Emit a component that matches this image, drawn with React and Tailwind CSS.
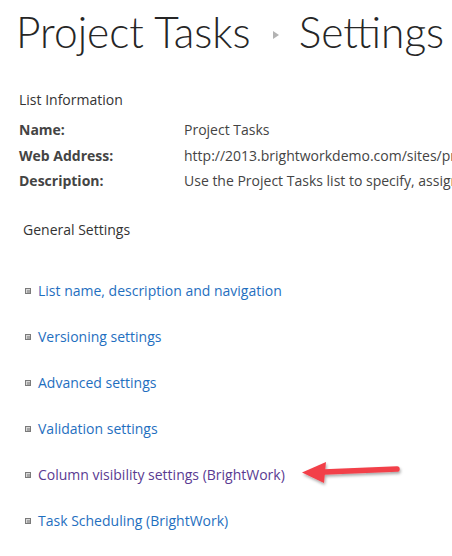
import React from 'react'

const font = { fontFamily: '"Open Sans", "Noto Sans", sans-serif' }
const titleFont = { fontFamily: 'Lato, "Open Sans", sans-serif' }

function Bullet() {
  return (
    <span className="inline-block w-[6px] h-[6px] bg-[#a6a6a6] border border-[#7a7a7a] shadow-[inset_1px_1px_0_#d8d8d8] mr-[7px] shrink-0" />
  )
}

function SettingLink({ children, visited }) {
  return (
    <li className="flex items-center h-[46px]">
      <Bullet />
      <a
        href="#"
        className={`text-[14px] ${visited ? 'text-[#5a3b92]' : 'text-[#1f6fc0]'}`}
      >
        {children}
      </a>
    </li>
  )
}

function Arrow() {
  return (
    <svg className="absolute left-[273px] top-[-17px]" width="110" height="30" viewBox="0 0 110 30">
      <defs>
        <filter id="sh" x="-20%" y="-50%" width="140%" height="200%">
          <feDropShadow dx="1" dy="2" stdDeviation="1.5" floodColor="#000" floodOpacity="0.35" />
        </filter>
      </defs>
      <g filter="url(#sh)">
        <line x1="26" y1="14" x2="99" y2="11" stroke="#f2404a" strokeWidth="5.5" strokeLinecap="round" />
        <polygon points="4,14.5 28,4 26,25" fill="#f2404a" />
      </g>
    </svg>
  )
}

export default function App() {
  return (
    <div className="w-[452px] h-[556px] bg-white overflow-hidden text-[#444]" style={font}>
      <div className="flex items-center pl-[16px] pt-[3px] h-[62px] text-[#262626] whitespace-nowrap" style={titleFont}>
        <span className="text-[42.5px] font-light leading-none">Project Tasks</span>
        <span className="ml-[22px] mr-[20px] w-0 h-0 border-y-[4.5px] border-y-transparent border-l-[6px] border-l-[#b3b3b3] mt-[4px] shrink-0" />
        <span className="text-[42.5px] font-light leading-none">Settings</span>
      </div>

      <div className="pl-[19px] pt-[28px]">
        <div className="text-[14px] leading-[20px] text-[#333]">List Information</div>
        <div className="mt-[7px] text-[14px]">
          <div className="flex h-[25.5px] items-center">
            <span className="w-[165px] shrink-0 font-bold text-[#444]">Name:</span>
            <span className="whitespace-nowrap">Project Tasks</span>
          </div>
          <div className="flex h-[25.5px] items-center">
            <span className="w-[165px] shrink-0 font-bold text-[#444]">Web Address:</span>
            <span className="whitespace-nowrap">http://2013.brightworkdemo.com/sites/projects/Lists/Tasks</span>
          </div>
          <div className="flex h-[25.5px] items-center">
            <span className="w-[165px] shrink-0 font-bold text-[#444]">Description:</span>
            <span className="whitespace-nowrap">Use the Project Tasks list to specify, assign and track work.</span>
          </div>
        </div>
        <div className="pl-[4px] mt-[25px] text-[14px] text-[#333]">General Settings</div>
      </div>

      <ul className="pl-[25px] mt-[28px]">
        <SettingLink>List name, description and navigation</SettingLink>
        <SettingLink>Versioning settings</SettingLink>
        <SettingLink>Advanced settings</SettingLink>
        <SettingLink>Validation settings</SettingLink>
        <li className="flex items-center h-[46px] relative">
          <Bullet />
          <a href="#" className="text-[14px] text-[#5a3b92]">Column visibility settings (BrightWork)</a>
          <div className="absolute left-0 top-1/2">
            <Arrow />
          </div>
        </li>
        <SettingLink>Task Scheduling (BrightWork)</SettingLink>
      </ul>
    </div>
  )
}
